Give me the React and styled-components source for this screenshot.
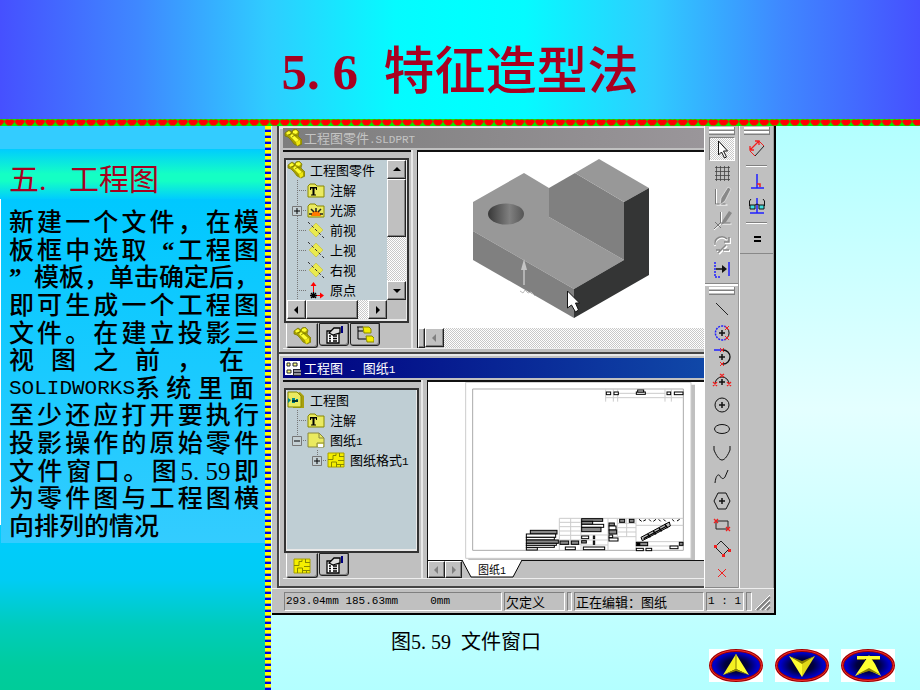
import React from "react";
import styled, { createGlobalStyle, css } from "styled-components";

const treePart = [
  { icon: "folderT", label: "注解" },
  { icon: "light", label: "光源", box: "+" },
  { icon: "plane", label: "前视" },
  { icon: "plane", label: "上视" },
  { icon: "plane", label: "右视" },
  { icon: "origin", label: "原点" },
];

const sketchTools = ["line", "arcCenter", "arcTangent", "arc3", "circle", "ellipse", "parabola", "spline", "polygon", "rect", "rectTilt", "point"];
const standardTools = ["grid", "sketch", "sketch3d", "rebuild", "convert"];

const icons = {
  part: (
    <g>
      <path d="M1 4l4-3 3 2 1-2 3-1 3 3-1 4 4 4v4l-4 2-4-2-3-4-3-3-3-1z" fill="#a8a000" stroke="#777700" strokeWidth=".7" />
      <path d="M2 4l3-2 2 2-3 2zM9 2l3-1 2 2-2 2-3-1zM6 7l2-2 7 6-3 2z" fill="#ffff30" />
      <path d="M12 13l4-2v4l-3 2z" fill="#f0e810" />
      <path d="M4 6l3-1 1-2M8 8l3-2 2 1" stroke="#777700" fill="none" strokeWidth=".8" />
    </g>
  ),
  folderT: (
    <g>
      <path d="M1 5l2-2h5l2 2h7v11H1z" fill="#eaea60" stroke="#888800" />
      <path d="M3 6h7v3H9V7.500H7.500v6H9v1H4v-1h1.500v-6H4V9H3z" fill="#000" />
    </g>
  ),
  light: (
    <g>
      <path d="M1 5l2-2h5l2 2h7v11H1z" fill="#eaea60" stroke="#888800" />
      <path d="M4 15a5 5 0 0 1 10 0z" fill="#ff7a00" />
      <path d="M2 13h3M4 8l3 3M9 7v4M14 8l-3 3M16 13h-3" stroke="#222" strokeWidth="1.500" />
    </g>
  ),
  plane: (
    <g>
      <path d="M9 2l7 7-7 7-7-7z" fill="#eaea50" stroke="#c8c860" />
      <path d="M1 1l16 16" stroke="#333" strokeDasharray="3 2" />
    </g>
  ),
  origin: (
    <g fill="none">
      <path d="M6.500 14V3M6 14.500h9" stroke="#f00" />
      <path d="M6.500 1l3 4h-6zM17 14.500l-4-3v6z" fill="#f00" />
      <path d="M4 12l5 5M9 12l-5 5M6.500 11v6M3 14.500h7" stroke="#000" strokeWidth="1.300" />
    </g>
  ),
  drawing: (
    <g>
      <path d="M5 4l8-3 4 4v12H6z" fill="#a8a010" />
      <path d="M1 1h9l4 4v11H1z" fill="#eaea60" stroke="#888800" />
      <path d="M1 7l3 2-3 3zM5 7h3v5H5zM9 8h2v3H9z" fill="#088" />
      <path d="M5 10h6" stroke="#033" strokeWidth="2" />
    </g>
  ),
  sheet: (
    <g stroke="#888840">
      <path d="M1 2h11l5 5v9H1z" fill="#eaea60" />
      <path d="M12 2v5h5M10 16v-4h7" fill="none" />
      <path d="M11 13h5v3h-5z" fill="#fff" stroke="none" />
    </g>
  ),
  format: (
    <g fill="none" stroke="#888800">
      <path d="M1 2h16v14H1z" fill="#f4ee00" stroke="#a8a000" />
      <path d="M1 8.500h5v-4h3v-2M4.500 16v-5h5v5M9 13.500h8M13.500 13v3M12 5.500h5M12.500 2v3M11 9.500h6" />
    </g>
  ),
  props: (
    <g strokeWidth="1.300">
      <path d="M2 5h12v12H2z" fill="#fff" stroke="#000" />
      <path d="M4 10h2M8 10h4M4 12.500h2M8 12.500h4M4 15h2M8 15h4" stroke="#000" />
      <path d="M4 7l5-5h6v5l-4 1-3 1-2-1z" fill="#ddd" stroke="#000" />
      <path d="M16 0h2v7h-2z" fill="#000080" />
    </g>
  ),
  config: (
    <g>
      <path d="M1 1h6M2 1v12h8M2 5h5" stroke="#000" fill="none" />
      <path d="M7 1h6l2 2v4H8z" fill="#f4ee00" stroke="#888800" />
      <path d="M10 10h6l2 2v4h-7z" fill="#f4ee00" stroke="#888800" />
    </g>
  ),
  window: (
    <g>
      <path d="M1 2h15v14H1z" fill="#fff" />
      <path d="M3 4h3v3H3zM9 4h4v3H9zM3 11h4v3H3z" fill="#ffff80" stroke="#223" />
      <path d="M9 10h8v7H9z" fill="#223" />
      <path d="M10 12h7M10 15h7" stroke="#fff" />
    </g>
  ),
  arrow: <path d="M8.500 4v14l3-3 3 6 2-1-3-6h4z" fill="#fff" stroke="#111" />,
  grid: (
    <path
      d="M5 6.500h15M5 10.500h15M5 14.500h15M5 18.500h15M6.500 5v15M10.500 5v15M14.500 5v15M18.500 5v15"
      stroke="#444"
      strokeWidth=".8"
    />
  ),
  sketch: (
    <g fill="none">
      <path d="M6.500 4v16h11" stroke="#fff" />
      <path d="M5.500 4v15h10" stroke="#777" />
      <path d="M18 2l3 2-6 12-5 4 1-7z" fill="#888" stroke="#eee" strokeWidth=".7" />
    </g>
  ),
  sketch3d: (
    <g fill="none">
      <path d="M11.500 3v12h10M11 15l-7 6" stroke="#fff" />
      <path d="M10.500 3v11h10M10 14l-6 6M5 13l6 6" stroke="#777" />
      <path d="M19 2l3 2-6 9-5 3 2-5z" fill="#888" />
    </g>
  ),
  rebuild: (
    <g fill="none">
      <path d="M5 13a7 7 0 0 1 12-6M20 5v5h-5M7 18h4M14 18h6M9 21l8-8" stroke="#fff" strokeWidth="2" />
      <path d="M5 12a7 7 0 0 1 12-6M19 4v5h-5M6 17h4M13 17h6M8 20l8-8" stroke="#888" strokeWidth="1.500" />
    </g>
  ),
  convert: (
    <g fill="none" strokeWidth="1.500">
      <path d="M5 5v15h5" stroke="#2020ff" strokeDasharray="2 1" />
      <path d="M19 5v14" stroke="#2020ff" />
      <path d="M6 12h9" stroke="#111" />
      <path d="M12 8l5 4-5 4z" fill="#111" />
    </g>
  ),
  line: <path d="M6 6l12 12" stroke="#222" />,
  arcCenter: (
    <g fill="none">
      <path d="M16 6a7 7 0 1 0 0 12" stroke="#2020ff" strokeWidth="1.500" strokeDasharray="2 1" />
      <path d="M17 7a7 7 0 0 1 0 10" stroke="#111" />
      <path d="M9 12h6M12 9v6" stroke="#111" strokeWidth="1.500" />
      <path d="M15 5l4 4M19 5l-4 4M15 15l4 4M19 15l-4 4" stroke="#f02020" />
    </g>
  ),
  arcTangent: (
    <g fill="none">
      <path d="M4 5h9" stroke="#2020ff" strokeWidth="1.500" />
      <path d="M13 5a7 7 0 0 1 0 14" stroke="#111" strokeWidth="1.300" />
      <path d="M9 12h6M12 9v6" stroke="#111" strokeWidth="1.500" />
      <path d="M10 3l4 4M14 3l-4 4M10 17l4 4M14 17l-4 4" stroke="#f02020" />
    </g>
  ),
  arc3: (
    <g fill="none">
      <path d="M5 15a7 7 0 0 1 14 0" stroke="#111" />
      <path d="M9 13h6M12 10v6" stroke="#111" strokeWidth="1.500" />
      <path d="M3 13l4 4M7 13l-4 4M17 13l4 4M21 13l-4 4M10 5l4 3M14 5l-4 3" stroke="#f02020" strokeWidth="1.300" />
    </g>
  ),
  circle: (
    <g fill="none" stroke="#111">
      <circle cx="12" cy="12" r="7" />
      <path d="M9 12h6M12 9v6" strokeWidth="1.500" />
    </g>
  ),
  ellipse: <ellipse cx="12" cy="12" rx="7.500" ry="4.500" fill="none" stroke="#111" />,
  parabola: <path d="M4 5v4c2 5 5 10 8 10s6-5 8-10V5" fill="none" stroke="#111" />,
  spline: <path d="M5 18c1-9 4-9 5-7s3 4 5 1l3-7" fill="none" stroke="#111" />,
  polygon: (
    <g fill="none" stroke="#111">
      <path d="M8 4h8l4 8-4 8H8l-4-8z" />
      <path d="M9 12h6M12 9v6" strokeWidth="1.500" />
    </g>
  ),
  rect: (
    <g fill="none">
      <path d="M6 8h12v8H6z" stroke="#222" />
      <path d="M4 6l4 4M8 6l-4 4M16 14l4 4M20 14l-4 4" stroke="#f02020" strokeWidth="1.300" />
    </g>
  ),
  rectTilt: (
    <g>
      <path d="M11 4l8 8-6 6-8-8z" fill="none" stroke="#222" />
      <path d="M4 8h3v3H4zM18 12h3v3h-3zM12 17h3v3h-3z" fill="#f02020" />
    </g>
  ),
  point: <path d="M8 8l8 8M16 8l-8 8" stroke="#f02020" />,
  dimension: (
    <g fill="none">
      <path d="M19 9l-9 10" stroke="#222" />
      <path d="M14 4l5 5M5 14l5 5" stroke="#f02020" />
      <path d="M5 13l9-9M5 9v4h4M10 4h4v4" stroke="#f02020" strokeWidth="1.300" />
    </g>
  ),
  perpendicular: (
    <g fill="none">
      <path d="M12 4v14M6 18h13" stroke="#2020ff" strokeWidth="1.500" />
      <path d="M12 14h3v3" stroke="#f02020" strokeWidth="1.500" />
    </g>
  ),
  relations: (
    <g fill="none">
      <path d="M12 4v15M5 19h14" stroke="#2020ff" strokeWidth="1.500" />
      <path d="M6 5L4.500 7v5M18 5l1.500 2v5M10 11l2-1 2 1" stroke="#111" />
      <path d="M5 11h5v4H5zM14 11h5v4h-5z" fill="#40e0e0" stroke="#111" />
    </g>
  ),
  equals: <path d="M9 10h7M9 14h7" stroke="#000" strokeWidth="2" />,
};

const Icon = ({ name, size = 24 }) => (
  <svg width={size} height={size} viewBox={`0 0 ${size} ${size}`} aria-hidden="true">
    {icons[name]}
  </svg>
);

const Guide = ({ box, last, blank }) => (
  <svg width="20" height="20" aria-hidden="true">
    {!blank && (
      <g fill="none">
        <path d={last ? "M10.500 0v10" : "M10.500 0v20"} stroke="#777" strokeDasharray="1 1" />
        <path d="M10 10.500h10" stroke="#777" strokeDasharray="1 1" />
        {box && (
          <g>
            <path d="M5.500 6.500h9v9h-9z" fill="#c4d0d4" stroke="#777" />
            <path d={box === "+" ? "M7 11h6M10 8v6" : "M7 11h6"} stroke="#000" />
          </g>
        )}
      </g>
    )}
  </svg>
);

const Hearts = () => (
  <HeartLine aria-hidden="true">
    <defs>
      <pattern id="hearts" x="4.400" width="10.200" height="7" patternUnits="userSpaceOnUse">
        <path d="M0 0h10.200v7H0z" fill="#00f000" />
        <path d="M.1 2Q1 .2 3 .5L5.100 1 7.200.5Q9.200.2 10.100 2L9.500 4 7 6.500H3.200L.7 4z" fill="#f00" />
      </pattern>
    </defs>
    <rect width="100%" height="7" fill="url(#hearts)" />
  </HeartLine>
);

const PartDrawing = () => (
  <svg width="286" height="176" viewBox="418 152 286 176" aria-hidden="true">
    <defs>
      <linearGradient id="hole">
        <stop offset="0" stopColor="#383838" />
        <stop offset=".6" stopColor="#808080" />
        <stop offset="1" stopColor="#555" />
      </linearGradient>
    </defs>
    <path d="M473 202l51-29 25 15v29l75 43-50 29-101-58z" fill="#989898" />
    <path d="M473 231l101 58v29l-101-58z" fill="#808080" />
    <path d="M549 188l26-15 49 29v58l-75-43z" fill="#808080" />
    <path d="M575 173l24-14 50 29-25 14z" fill="#989898" />
    <path d="M624 202l25-14v87l-75 43v-29l50-29z" fill="#343535" />
    <ellipse cx="506" cy="214" rx="18" ry="10.500" fill="url(#hole)" />
    <path d="M524 285v-16" stroke="#c4c4c4" strokeWidth="1.500" />
    <path d="M524 259l3 11h-6z" fill="#c4c4c4" />
    <path d="M520 291l3 2 2-3 3 3 3-1 4 4" stroke="#bbb" fill="none" />
    <path d="M567.500 291v17l4-3 4 7 3-2-3-7h4z" fill="#fff" stroke="#111" />
  </svg>
);

// boxes of the title block: x, y, width, height, filled
const blocks = [
  [556, 126, 13, 8], [579, 126, 13, 8], [646, 126, 27, 7], [650, 120, 18, 6], [738, 126, 11, 8], [760, 126, 26, 8],
  [328, 541, 80, 11, 1], [316, 552, 88, 10], [316, 562, 84, 8], [316, 570, 96, 10, 1], [316, 580, 90, 6], [316, 586, 84, 6], [316, 593, 33, 7],
  [417, 573, 26, 10, 1], [451, 573, 22, 10, 1], [433, 591, 30, 8],
  [482, 506, 63, 8, 1], [482, 514, 33, 9, 1], [482, 523, 66, 9], [482, 532, 58, 13, 1], [482, 558, 21, 8], [517, 558, 4, 8, 1], [482, 572, 14, 7, 1], [517, 573, 4, 10, 1], [487, 591, 64, 8],
  [564, 519, 16, 9, 1], [564, 528, 21, 12], [564, 540, 23, 12, 1], [564, 555, 11, 8], [564, 564, 27, 9], [596, 508, 15, 9, 1], [625, 508, 14, 9, 1],
  [646, 577, 34, 10, 1], [646, 595, 21, 7], [675, 595, 17, 7], [747, 588, 24, 8], [775, 577, 11, 9, 1],
];

const SheetDrawing = () => (
  <svg width="277" height="179" viewBox="427 382 277 179" aria-hidden="true">
    <g transform="translate(420 350) scale(.33333)">
      <path d="M142 104h680v528H142z" fill="#c0c0c0" />
      <path d="M134 97h676v528H134z" fill="#fff" stroke="#ccc" strokeWidth="3" />
      <g fill="none" stroke="#ccc" strokeWidth="3">
        <path d="M155 117h632v484H155z" stroke="#aaa" />
        <path d="M554 117v38M577 117v38M590 117v38M732 117v38M751 117v38M554 143h233M590 130h142" />
        <path d="M415 505h372M415 505v96M449 505v78M480 505v96M561 505v96M589 505v55M617 505v55M645 505v96" />
        <path d="M415 517h65M415 530h65M415 543h65M415 556h65M415 570h65M415 583h65M480 555h81M480 570h81M480 585h81M589 520h56M561 533h84M561 546h84M561 560h84M645 526h142M645 575h142M645 588h142" />
      </g>
      {blocks.map(([x, y, w, h, filled]) => (
        <rect key={`${x}-${y}`} x={x} y={y} width={w} height={h} fill={filled ? "#888" : "#fff"} stroke="#000" strokeWidth="3" />
      ))}
      <path d="M654 508l8 6M667 513l8-4M684 508l6 6M697 514l8-6M713 508l6 6M728 508l6 6M754 508l5 6M768 513l8-5" stroke="#000" strokeWidth="3" />
      <path d="M660 562l85-46 3 12-84 44z" fill="#bbb" stroke="#000" strokeWidth="3" />
      <path d="M668 566l70-38M680 552l8 10M697 543l8 10M714 534l8 10M731 522l9 12" stroke="#000" strokeWidth="4" />
      <path d="M648 578h10v10h-10z" />
    </g>
  </svg>
);

const arrowHeads = {
  up: "M5 10h8l-4-4z",
  down: "M5 7h8l-4 4z",
  left: "M6 9l4-4v8z",
  right: "M11 9L7 5v8z",
};

const ScrollArrow = ({ dir, label, muted }) => (
  <ScrollButton aria-label={label}>
    <svg width="17" height="18" aria-hidden="true">
      <path d={arrowHeads[dir]} fill={muted ? "#808080" : "#000"} />
    </svg>
  </ScrollButton>
);

const navShapes = {
  up: (
    <g>
      <path d="M27 5L14 26l13-6z" fill="#f4f020" />
      <path d="M27 5l13 21-13-6z" fill="#ffff30" />
      <path d="M14 26l13-6 13 6-13-4z" fill="#8a8000" />
      <path d="M27 5v16" stroke="#8a8000" />
    </g>
  ),
  down: (
    <g>
      <path d="M14 7l13 6v15z" fill="#ffff30" />
      <path d="M40 7l-13 6v15z" fill="#e0d818" />
      <path d="M14 7l13 5 13-5-13 8z" fill="#8a8000" />
    </g>
  ),
  first: (
    <g>
      <path d="M16 7h23v3H16z" fill="#ffff30" />
      <path d="M28 6l6 9 6 12-12-6-14 6 8-12z" fill="#ffff30" />
      <path d="M15 26l13-7 12 7-12-4z" fill="#8a8000" />
      <path d="M16 10.500h8M31 10.500h8" stroke="#8a8000" />
    </g>
  ),
};

const NavIcon = ({ name }) => (
  <NavButton aria-label={name}>
    <svg width="54" height="33" aria-hidden="true">
      <defs>
        <radialGradient id="navFill">
          <stop offset="0" stopColor="#000010" />
          <stop offset=".45" stopColor="#000040" />
          <stop offset=".85" stopColor="#0000c8" />
        </radialGradient>
      </defs>
      <ellipse cx="27" cy="16.500" rx="25.500" ry="15" fill="url(#navFill)" stroke="#a00000" strokeWidth="3" />
      <ellipse cx="27" cy="16.500" rx="25.500" ry="15" fill="none" stroke="#f03030" />
      {navShapes[name]}
    </svg>
  </NavButton>
);

const App = () => {
  return (
    <Page lang="zh-CN">
      <GlobalStyle />
      <Header>
        <Title>
          <Chapter>5<Half>.</Half>6<Half> </Half></Chapter>特征造型法
        </Title>
      </Header>
      <Hearts />
      <Body>
        <Side>
          <SideTitle>
            五<Half>.</Half><Half> </Half>工程图
          </SideTitle>
          <Note>
            <NoteLine>新建一个文件，在模</NoteLine>
            <NoteLine>板框中选取<Quote open>“</Quote>工程图</NoteLine>
            <NoteLine><Quote>”</Quote>模板，单击确定后，</NoteLine>
            <NoteLine>即可生成一个工程图</NoteLine>
            <NoteLine>文件。在建立投影三</NoteLine>
            <NoteLine trim={15}>视图之前，在</NoteLine>
            <NoteLine trim={5} split>
              <Latin size={21}>SOLIDWORKS</Latin>
              <Fill>系统里面</Fill>
            </NoteLine>
            <NoteLine>至少还应打开要执行</NoteLine>
            <NoteLine>投影操作的原始零件</NoteLine>
            <NoteLine>文件窗口。图5<Half>.</Half>59即</NoteLine>
            <NoteLine>为零件图与工程图横</NoteLine>
            <NoteLine end>向排列的情况</NoteLine>
          </Note>
        </Side>
        <Stripe />
        <Main>
          <AppWindow>
            <Workspace>
              <Documents>
                <Child>
                  <TitleBar>
                    <Icon name="part" size={18} />
                    <span>工程图零件<Latin size={11}>.SLDPRT</Latin></span>
                  </TitleBar>
                  <ChildBody>
                    <Pane width={128}>
                      <TreeFrame>
                        <TreeRow>
                          <TreeArea>
                            <Item root>
                              <Icon name="part" size={18} />
                              <span>工程图零件</span>
                            </Item>
                            {treePart.map((item) => (
                              <Item key={item.label}>
                                <Guide box={item.box} />
                                <Icon name={item.icon} size={18} />
                                <span>{item.label}</span>
                              </Item>
                            ))}
                          </TreeArea>
                          <VerticalBar>
                            <ScrollArrow dir="up" label="向上" />
                            <Thumb size={58} />
                            <Track />
                            <ScrollArrow dir="down" label="向下" />
                          </VerticalBar>
                        </TreeRow>
                        <HorizontalBar>
                          <ScrollArrow dir="left" label="向左" />
                          <Thumb size={52} row />
                          <Track />
                          <ScrollArrow dir="right" label="向右" />
                          <Corner />
                        </HorizontalBar>
                      </TreeFrame>
                      <Tabs>
                        <Tab active aria-label="特征"><Icon name="part" size={18} /></Tab>
                        <Tab aria-label="属性"><Icon name="props" size={18} /></Tab>
                        <Tab aria-label="配置"><Icon name="config" size={18} /></Tab>
                      </Tabs>
                    </Pane>
                    <View>
                      <Canvas><PartDrawing /></Canvas>
                      <ViewScroll>
                        <Handle />
                        <ScrollArrow dir="left" label="向左滚动" muted />
                        <Track />
                      </ViewScroll>
                    </View>
                  </ChildBody>
                </Child>
                <Child second>
                  <TitleBar active>
                    <Icon name="window" size={18} />
                    <span>工程图<Latin size={11}> - </Latin>图纸<Latin size={11}>1</Latin></span>
                  </TitleBar>
                  <ChildBody>
                    <Pane width={138}>
                      <TreeFrame>
                        <TreeArea>
                          <Item root>
                            <Icon name="drawing" size={18} />
                            <span>工程图</span>
                          </Item>
                          <Item>
                            <Guide />
                            <Icon name="folderT" size={18} />
                            <span>注解</span>
                          </Item>
                          <Item>
                            <Guide box="-" last />
                            <Icon name="sheet" size={18} />
                            <span>图纸<Latin size={11}>1</Latin></span>
                          </Item>
                          <Item>
                            <Guide blank />
                            <Guide box="+" last />
                            <Icon name="format" size={18} />
                            <span>图纸格式<Latin size={11}>1</Latin></span>
                          </Item>
                        </TreeArea>
                      </TreeFrame>
                      <Tabs>
                        <Tab active aria-label="图纸格式"><Icon name="format" size={18} /></Tab>
                        <Tab aria-label="属性"><Icon name="props" size={18} /></Tab>
                      </Tabs>
                    </Pane>
                    <View>
                      <Canvas><SheetDrawing /></Canvas>
                      <SheetBar>
                        <ScrollArrow dir="left" label="上一张" muted />
                        <ScrollArrow dir="right" label="下一张" muted />
                        <SheetTab>
                          <svg width="60" height="18" aria-hidden="true">
                            <path d="M0 0l9 17h42l9-17z" fill="#fff" />
                            <path d="M0 0l9 17h42l9-17" fill="none" stroke="#000" />
                          </svg>
                          <span>图纸<Latin size={10}>1</Latin></span>
                        </SheetTab>
                      </SheetBar>
                    </View>
                  </ChildBody>
                </Child>
              </Documents>
              <ToolColumn>
                <Toolbar>
                  <Grip />
                  <Tool pressed aria-label="arrow"><Icon name="arrow" /></Tool>
                  {standardTools.map((name) => (
                    <Tool key={name} aria-label={name}><Icon name={name} /></Tool>
                  ))}
                </Toolbar>
                <Toolbar grow>
                  <Grip />
                  {sketchTools.map((name) => (
                    <Tool key={name} aria-label={name}><Icon name={name} /></Tool>
                  ))}
                </Toolbar>
              </ToolColumn>
              <ToolColumn>
                <Toolbar>
                  <Grip />
                  <Tool aria-label="dimension"><Icon name="dimension" /></Tool>
                  <Divider />
                  <Tool aria-label="perpendicular"><Icon name="perpendicular" /></Tool>
                  <Tool aria-label="relations"><Icon name="relations" /></Tool>
                  <Divider />
                  <Tool aria-label="equals"><Icon name="equals" /></Tool>
                </Toolbar>
              </ToolColumn>
            </Workspace>
            <StatusBar>
              <Status grow>
                <Latin size={11}>293.04mm 185.63mm</Latin>
                <Latin size={11}>0mm</Latin>
              </Status>
              <Status width={61}>欠定义</Status>
              <Status width={5} />
              <Status width={130}>正在编辑：图纸</Status>
              <Status width={38}><Latin size={11}>1 : 1</Latin></Status>
              <Status width={6} />
              <svg width="18" height="20" aria-hidden="true">
                <path d="M3 18L16 5M8 18l8-8M13 18l3-3" stroke="#808080" strokeWidth="2" />
                <path d="M1 18L16 3M6 18l10-10M11 18l5-5" stroke="#fff" />
              </svg>
            </StatusBar>
          </AppWindow>
          <Footer>
            <Caption>图5<Half>.</Half>59<Half> </Half>文件窗口</Caption>
            <Nav>
              <NavIcon name="up" />
              <NavIcon name="down" />
              <NavIcon name="first" />
            </Nav>
          </Footer>
        </Main>
      </Body>
    </Page>
  );
};

export default App;

const GlobalStyle = createGlobalStyle`
  * {
    box-sizing: border-box;
  }

  body {
    margin: 0;
  }

  button {
    display: flex;
    flex: none;
    align-items: center;
    justify-content: center;
    margin: 0;
    padding: 0;
    border: 0;
    background: none;
    font: inherit;
    color: inherit;
  }

  svg {
    display: block;
    flex: none;
  }
`;

const slideFont = css`
  font-family: "Liberation Serif", "Noto Sans CJK SC", serif;
`;

const hatch = css`
  background: repeating-conic-gradient(#fff 0 25%, #c8c8c8 0 50%) 0 0 / 2px 2px;
`;

const raised = css`
  background: #c0c0c0;
  border: 1px solid;
  border-color: #fff #222 #222 #fff;
  box-shadow: inset -1px -1px #808080;
`;

const Page = styled.div`
  display: flex;
  flex-direction: column;
  min-height: 100vh;
  overflow: hidden;
  font-family: "Noto Sans CJK SC", sans-serif;
  text-spacing-trim: space-all;
  color: #000;
`;

const Latin = styled.span`
  font-family: "Liberation Mono", monospace;
  font-size: ${({ size }) => size}px;
  line-height: 1;
  white-space: pre;
`;

// half-width cell, as wide as a digit
const Half = styled.span`
  display: inline-block;
  width: 0.5em;
  text-align: left;
  text-align-last: left;
  white-space: pre;
`;

// full-width cell for a quotation mark
const Quote = styled.span`
  display: inline-block;
  width: 1em;
  font-weight: 700;
  text-align-last: ${({ open }) => (open ? "right" : "left")};
`;

const Chapter = styled.span`
  font-weight: 700;
`;

const Header = styled.header`
  display: flex;
  align-items: center;
  justify-content: center;
  height: 119px;
  padding-top: 24px;
  background: linear-gradient(
    to right,
    #4650ff,
    #3f88ff 15%,
    #2fccff 29%,
    #05fbff 43%,
    #00ffff 50%,
    #05fbff 57%,
    #2fccff 71%,
    #3f88ff 85%,
    #4650ff
  );
`;

const Title = styled.h1`
  ${slideFont}
  margin: 0;
  font-size: 51px;
  font-weight: 500;
  line-height: 60px;
  color: #a80020;
`;

const HeartLine = styled.svg`
  width: 100%;
  height: 7px;
`;

const Body = styled.div`
  display: flex;
  flex: 1;
`;

const Side = styled.aside`
  width: 265px;
  padding-top: 23px;
  background: linear-gradient(
    #33ccff 23px,
    #fff 23px,
    #fff 399px,
    #00ccff 399px,
    #00ccf4 454px,
    #00ccbb 500px,
    #00cc9e 540px,
    #00cc99
  );
`;

const SideTitle = styled.h2`
  ${slideFont}
  height: 50px;
  margin: 0;
  padding: 4px 9px;
  background: linear-gradient(#00ccff, #14ffc4 50%, #14ffc4 64%, #00ccff);
  font-size: 30px;
  font-weight: 400;
  line-height: 54px;
  color: #a80020;
`;

const Note = styled.div`
  ${slideFont}
  display: flex;
  flex-direction: column;
  justify-content: space-between;
  min-height: 344px;
  margin-left: 1px;
  padding: 10px 6px 3px 8px;
  background: linear-gradient(#00c8ff, #33ccff);
`;

const NoteLine = styled.div`
  display: ${({ split }) => (split ? "flex" : "block")};
  align-items: center;
  height: 27px;
  margin-right: ${({ trim = 0 }) => trim}px;
  font-size: 25px;
  font-weight: 500;
  line-height: 27px;
  white-space: nowrap;
  text-align-last: ${({ end }) => (end ? "left" : "justify")};
`;

const Fill = styled.span`
  flex: 1;
`;

const Stripe = styled.div`
  width: 6px;
  background: repeating-linear-gradient(#ff0 0 3px, #a0a060 3px 4px, #00e 4px 6px);
`;

const Main = styled.main`
  display: flex;
  flex: 1;
  flex-direction: column;
  min-width: 0;
  background: linear-gradient(#b3ffff, #e4ffff 50%, #b3ffff);
`;

const AppWindow = styled.section`
  margin: 0 144px 0 1px;
  border-right: 2px solid #000;
  border-bottom: 2px solid #000;
  background: #c0c0c0;
  font-size: 13px;
`;

const Workspace = styled.div`
  display: flex;
  height: 462px;
`;

const Documents = styled.div`
  flex: 1;
  min-width: 0;
  margin-left: 5px;
  border-left: 2px solid #444;
`;

const Child = styled.section`
  height: ${({ second }) => (second ? 236 : 226)}px;
  padding: ${({ second }) => (second ? 4 : 1)}px 0 0 4px;
  border-top: ${({ second }) => (second ? "2px solid #444" : "1px solid #ddd")};
  border-bottom: ${({ second }) => (second ? "2px solid #444" : "0")};
  box-shadow: inset 1px 2px #e8e8e8;
`;

const TitleBar = styled.div`
  display: flex;
  align-items: center;
  gap: 2px;
  height: 20px;
  padding-left: 1px;
  background: ${({ active }) => (active ? "linear-gradient(to right, #000080, #1048a8)" : "linear-gradient(to right, #7d7d7d, #9a969a)")};
  color: ${({ active }) => (active ? "#fff" : "#c4c4c4")};
  line-height: 20px;
`;

const ChildBody = styled.div`
  display: flex;
  height: 199px;
  margin-top: 2px;
  border-bottom: 1px solid #eee;
`;

const Pane = styled.div`
  display: flex;
  flex-direction: column;
  width: ${({ width }) => width}px;
  margin-right: 6px;
  padding: 6px 2px 0 1px;
  border-top: 2px solid #111;
  box-shadow: 2px 0 #e8e8e8;
`;

const TreeFrame = styled.div`
  display: flex;
  flex: 1;
  flex-direction: column;
  min-height: 0;
  padding: 0 1px 2px 1px;
  border: 2px solid #333;
  background: #e8e8e8;
`;

const TreeRow = styled.div`
  display: flex;
  flex: 1;
  min-height: 0;
`;

const TreeArea = styled.div`
  flex: 1;
  min-width: 0;
  overflow: hidden;
  background: #bfced4;
`;

const Item = styled.div`
  display: flex;
  align-items: center;
  height: 20px;
  line-height: 20px;
  white-space: nowrap;

  > span {
    margin-left: 5px;
  }
`;

const ScrollButton = styled.button`
  ${raised}
  width: 19px;
  height: 19px;
`;

const VerticalBar = styled.div`
  display: flex;
  flex-direction: column;
  width: 19px;
`;

const HorizontalBar = styled.div`
  display: flex;
  height: 19px;
`;

const Thumb = styled.div`
  ${raised}
  width: ${({ row, size }) => (row ? size : 19)}px;
  height: ${({ row, size }) => (row ? 19 : size)}px;
`;

const Track = styled.div`
  ${hatch}
  flex: 1;
`;

const Corner = styled.div`
  width: 19px;
  background: #c0c0c0;
`;

const Tabs = styled.div`
  display: flex;
  gap: 1px;
  height: 25px;
  padding-left: 2px;
`;

const Tab = styled.button`
  width: ${({ active }) => (active ? 32 : 30)}px;
  height: ${({ active }) => (active ? 25 : 23)}px;
  border: 1px solid;
  border-color: ${({ active }) => (active ? "#c0c0c0" : "#222")} #222 #222 ${({ active }) => (active ? "#fff" : "#222")};
  border-radius: 0 0 3px 3px;
  box-shadow: inset -1px -1px #808080;
`;

const View = styled.div`
  display: flex;
  flex: 1;
  flex-direction: column;
  min-width: 0;
  border-top: 2px solid #111;
  border-left: 1px solid #111;
`;

const Canvas = styled.div`
  flex: 1;
  min-height: 0;
  overflow: hidden;
  background: #fff;
`;

const ViewScroll = styled.div`
  display: flex;
  height: 20px;
`;

const Handle = styled.div`
  ${raised}
  width: 7px;
`;

const SheetBar = styled.div`
  display: flex;
  height: 18px;
  border-top: 1px solid #111;

  > ${ScrollButton} {
    width: 17px;
    height: 17px;
  }
`;

const SheetTab = styled.button`
  position: relative;
  width: 60px;
  height: 17px;

  > svg {
    position: absolute;
    inset: -1px 0 0 0;
  }

  > span {
    position: relative;
    font-size: 11px;
    line-height: 15px;
  }
`;

const ToolColumn = styled.div`
  display: flex;
  flex-direction: column;
  width: 35px;
  border-left: 1px solid #fff;
  border-right: 1px solid #999;
`;

const Toolbar = styled.div`
  display: flex;
  flex: ${({ grow }) => (grow ? 1 : "none")};
  flex-direction: column;
  align-items: center;
  padding: 1px 0 2px;
  border-top: ${({ grow }) => (grow ? "2px solid #fff" : "0")};
  border-bottom: 1px solid #888;
`;

const Grip = styled.div`
  width: 26px;
  height: 8px;
  margin-bottom: 2px;
  border: solid #808080;
  border-width: 0 1px 1px 0;
  background: repeating-linear-gradient(#fff 0 2px, #c0c0c0 2px 3px, #808080 3px 4px);
`;

const Tool = styled.button`
  width: 26px;
  height: 24px;
  ${({ pressed }) =>
    pressed &&
    css`
      ${hatch}
      border: 1px solid;
      border-color: #808080 #fff #fff #808080;
    `}
`;

const Divider = styled.div`
  width: 21px;
  height: 2px;
  margin: 4px 0 3px;
  border-top: 1px solid #808080;
  border-bottom: 1px solid #fff;
`;

const StatusBar = styled.footer`
  display: flex;
  gap: 2px;
  height: 25px;
  padding: 3px 2px 2px 12px;
  border-top: 1px solid #eee;
`;

const Status = styled.div`
  display: flex;
  flex: ${({ grow }) => (grow ? 1 : "none")};
  align-items: center;
  gap: 32px;
  width: ${({ width }) => (width ? `${width}px` : "auto")};
  padding-left: 1px;
  border: 1px solid;
  border-color: #808080 #fff #fff #808080;
  line-height: 18px;
  white-space: nowrap;
`;

const Footer = styled.div`
  display: flex;
  flex: 1;
  align-items: flex-start;
  justify-content: space-between;
  padding: 12px 25px 7px 120px;
`;

const Caption = styled.p`
  ${slideFont}
  margin: 0;
  font-size: 20px;
  line-height: 30px;
`;

const Nav = styled.nav`
  display: flex;
  gap: 12px;
  margin-top: 22px;
`;

const NavButton = styled.button`
  background: #fff;
`;
